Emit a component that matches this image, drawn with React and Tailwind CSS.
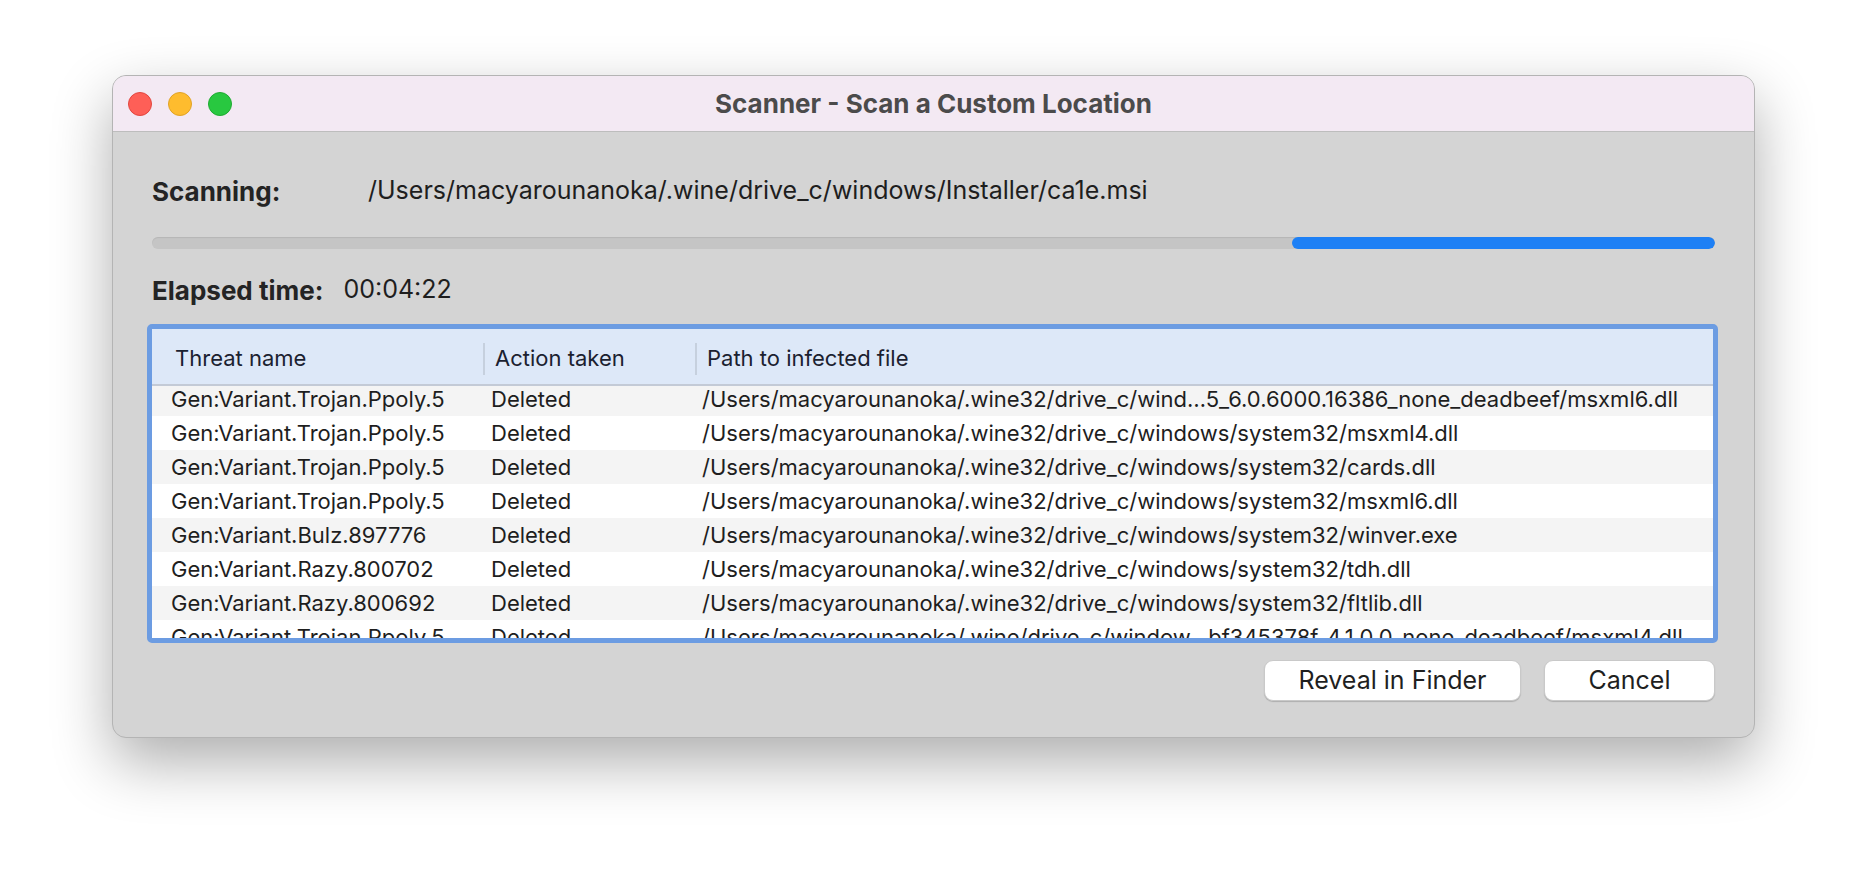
import React from 'react';

const rows = [
  ['Gen:Variant.Trojan.Ppoly.5', 'Deleted', '/Users/macyarounanoka/.wine32/drive_c/wind…5_6.0.6000.16386_none_deadbeef/msxml6.dll'],
  ['Gen:Variant.Trojan.Ppoly.5', 'Deleted', '/Users/macyarounanoka/.wine32/drive_c/windows/system32/msxml4.dll'],
  ['Gen:Variant.Trojan.Ppoly.5', 'Deleted', '/Users/macyarounanoka/.wine32/drive_c/windows/system32/cards.dll'],
  ['Gen:Variant.Trojan.Ppoly.5', 'Deleted', '/Users/macyarounanoka/.wine32/drive_c/windows/system32/msxml6.dll'],
  ['Gen:Variant.Bulz.897776', 'Deleted', '/Users/macyarounanoka/.wine32/drive_c/windows/system32/winver.exe'],
  ['Gen:Variant.Razy.800702', 'Deleted', '/Users/macyarounanoka/.wine32/drive_c/windows/system32/tdh.dll'],
  ['Gen:Variant.Razy.800692', 'Deleted', '/Users/macyarounanoka/.wine32/drive_c/windows/system32/fltlib.dll'],
  ['Gen:Variant.Trojan.Ppoly.5', 'Deleted', '/Users/macyarounanoka/.wine/drive_c/window…bf345378f_4.1.0.0_none_deadbeef/msxml4.dll'],
];

const HeaderCell = ({ children, first }) => (
  <div className="flex items-center h-full pt-[4px]">
    {!first && <div className="h-[32px] w-[2px] bg-[#c6d0de]" />}
    <span className={first ? 'pl-[23px]' : 'pl-[10px]'}>{children}</span>
  </div>
);

export default function App() {
  return (
    <div className="min-h-[886px] w-full bg-white pl-[112px] pt-[75px] font-['Inter','Liberation_Sans',sans-serif]">
      <div className="w-[1643px] h-[663px] rounded-[14px] border border-[#b4b4b4] bg-[#d4d4d4] shadow-[0_24px_60px_rgba(0,0,0,0.32)] overflow-hidden flex flex-col">
        {/* title bar */}
        <div className="h-[56px] shrink-0 bg-[#f3e9f3] border-b border-[#bdbdbd] grid grid-cols-[1fr_auto_1fr] items-center px-[15px]">
          <div className="flex gap-[16px]">
            <div className="w-[24px] h-[24px] rounded-full bg-[#fe5f57] border border-[#e2463f]" />
            <div className="w-[24px] h-[24px] rounded-full bg-[#febc2e] border border-[#e1a325]" />
            <div className="w-[24px] h-[24px] rounded-full bg-[#28c840] border border-[#1eab31]" />
          </div>
          <div className="text-[26px] leading-none font-bold text-[#4b4b4b]">Scanner - Scan a Custom Location</div>
          <div />
        </div>

        {/* content */}
        <div className="flex-1 flex flex-col px-[39px] pt-[45px] text-[#1e1e1e]">
          <div className="flex h-[28px] items-center text-[25px]">
            <span className="w-[216px] text-[26px] font-bold text-[#242424]">Scanning:</span>
            <span>/Users/macyarounanoka/.wine/drive_c/windows/Installer/ca1e.msi</span>
          </div>

          <div className="mt-[32px] h-[12px] rounded-full bg-[#c5c5c5] shadow-[inset_0_1px_1px_rgba(0,0,0,0.08)] flex overflow-hidden">
            <div className="w-[1140px]" />
            <div className="flex-1 rounded-full bg-[#1e80f5]" />
          </div>

          <div className="mt-[27px] flex h-[28px] items-center text-[25px]">
            <span className="text-[26px] font-bold text-[#242424]">Elapsed time:</span>
            <span className="ml-[20px]">00:04:22</span>
          </div>

          <div className="mt-[20px] -ml-[5px] -mr-[3px] h-[319px] rounded-[5px] border-[5px] border-[#6c9ce2] bg-white flex flex-col overflow-hidden text-[22px]">
            <div className="h-[57px] shrink-0 bg-[#dde8f8] border-b-2 border-[#c3cad6] grid grid-cols-[331px_212px_1fr] text-[#1b2130]">
              <HeaderCell first>Threat name</HeaderCell>
              <HeaderCell>Action taken</HeaderCell>
              <HeaderCell>Path to infected file</HeaderCell>
            </div>
            <div className="flex-1 overflow-hidden">
              <div className="-mt-[4px]">
                {rows.map((r, i) => (
                  <div
                    key={i}
                    className={`h-[34px] grid grid-cols-[331px_212px_1fr] items-center whitespace-nowrap ${i % 2 === 0 ? 'bg-[#f4f4f4]' : 'bg-white'}`}
                  >
                    <span className="pl-[19px]">{r[0]}</span>
                    <span className="pl-[8px]">{r[1]}</span>
                    <span className="pl-[7px]">{r[2]}</span>
                  </div>
                ))}
              </div>
            </div>
          </div>

          <div className="mt-[17px] flex justify-end gap-[23px]">
            <button className="w-[257px] h-[41px] rounded-[9px] bg-white border border-[#c9c9c9] shadow-[0_1px_1px_rgba(0,0,0,0.18)] text-[25px] leading-none text-[#1f1f1f]">
              Reveal in Finder
            </button>
            <button className="w-[171px] h-[41px] rounded-[9px] bg-white border border-[#c9c9c9] shadow-[0_1px_1px_rgba(0,0,0,0.18)] text-[25px] leading-none text-[#1f1f1f]">
              Cancel
            </button>
          </div>
        </div>
      </div>
    </div>
  );
}
